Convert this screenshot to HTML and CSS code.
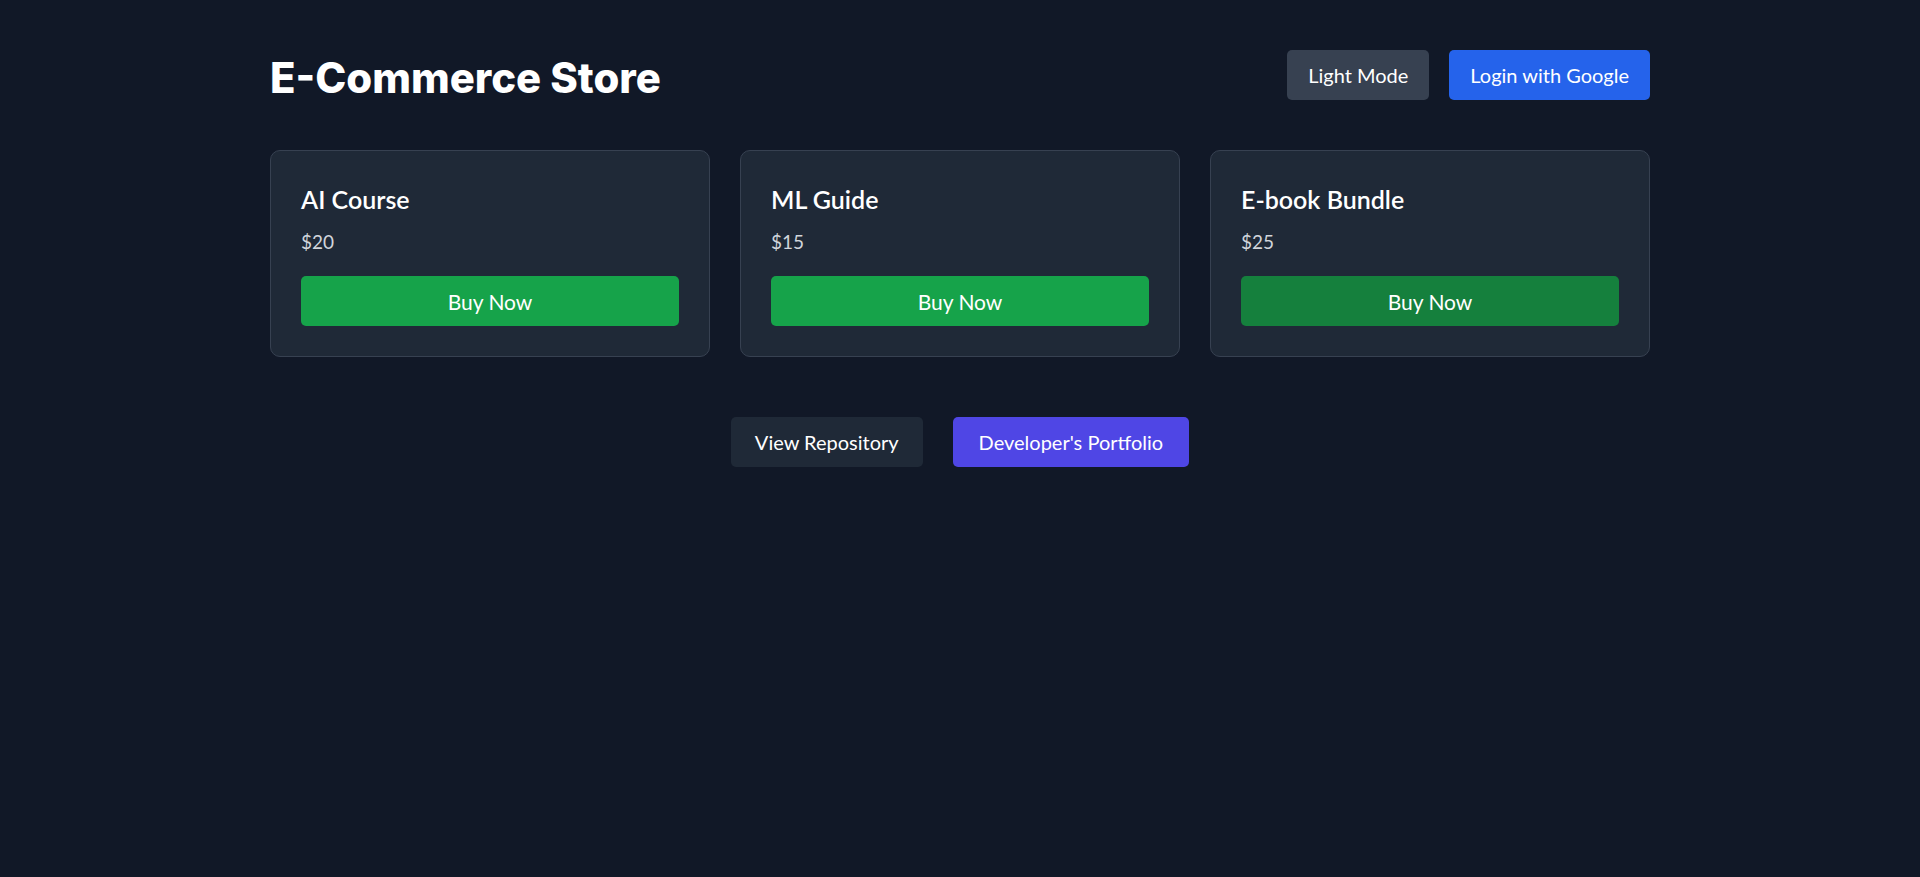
FILE: index.html
```html
<!DOCTYPE html>
<html lang="en">
<head>
<meta charset="utf-8">
<title>E-Commerce Store</title>
<link rel="stylesheet" href="styles.css">
</head>
<body>
<div class="page">
  <header class="header">
    <h1 class="title">E-Commerce Store</h1>
    <div class="header-actions">
      <button class="btn btn-gray">Light Mode</button>
      <button class="btn btn-blue">Login with Google</button>
    </div>
  </header>
  <main class="grid">
    <div class="card">
      <h2 class="card-title">AI Course</h2>
      <p class="price">$20</p>
      <button class="buy">Buy Now</button>
    </div>
    <div class="card">
      <h2 class="card-title">ML Guide</h2>
      <p class="price">$15</p>
      <button class="buy">Buy Now</button>
    </div>
    <div class="card">
      <h2 class="card-title">E-book Bundle</h2>
      <p class="price">$25</p>
      <button class="buy buy-dark">Buy Now</button>
    </div>
  </main>
  <div class="links">
    <a class="btn link-dark" href="#">View Repository</a>
    <a class="btn link-indigo" href="#">Developer's Portfolio</a>
  </div>
</div>
</body>
</html>
```

FILE: styles.css
```css
* { box-sizing: border-box; }
html, body { margin: 0; padding: 0; }
body {
  background: #111827;
  color: #ffffff;
  font-family: "Lato", "Liberation Sans", sans-serif;
  min-height: 877px;
}
.page {
  width: 1380px;
  margin: 0 auto;
  padding-top: 50px;
}
.header {
  display: flex;
  justify-content: space-between;
  align-items: center;
  height: 50px;
  margin-bottom: 50px;
}
.title {
  margin: 0;
  font-family: "Inter", "Lato", sans-serif;
  font-size: 41.8px;
  font-weight: 800;
  line-height: 50px;
  color: #ffffff;
  position: relative;
  top: 3px;
}
.header-actions {
  display: flex;
  gap: 20px;
}
.btn {
  display: inline-flex;
  align-items: center;
  justify-content: center;
  height: 50px;
  padding: 0 21px;
  border: none;
  border-radius: 5px;
  font-family: inherit;
  font-size: 20px;
  color: #ffffff;
  text-decoration: none;
  cursor: pointer;
}
.btn-gray { background: #374151; }
.btn-blue { background: #2563eb; }
.grid {
  display: grid;
  grid-template-columns: repeat(3, 1fr);
  gap: 30px;
}
.card {
  background: #1f2937;
  border: 1px solid #374151;
  border-radius: 10px;
  padding: 29px 29px 30px 30px;
}
.card-title {
  margin: 0;
  font-size: 25px;
  font-weight: 600;
  line-height: 38px;
}
.price {
  margin: 9px 0 20px;
  font-size: 19px;
  line-height: 29px;
  color: #d1d5db;
}
.buy {
  display: block;
  width: calc(100% - 1px);
  height: 50px;
  border: none;
  border-radius: 5px;
  background: #16a34a;
  color: #ffffff;
  font-family: inherit;
  font-size: 21px;
  cursor: pointer;
}
.buy-dark { background: #15803d; }
.links {
  display: flex;
  justify-content: center;
  gap: 30px;
  margin-top: 60px;
}
.link-dark { background: #1f2937; padding: 0 24px; }
.link-indigo { background: #4f46e5; padding: 0 26px; }
```
